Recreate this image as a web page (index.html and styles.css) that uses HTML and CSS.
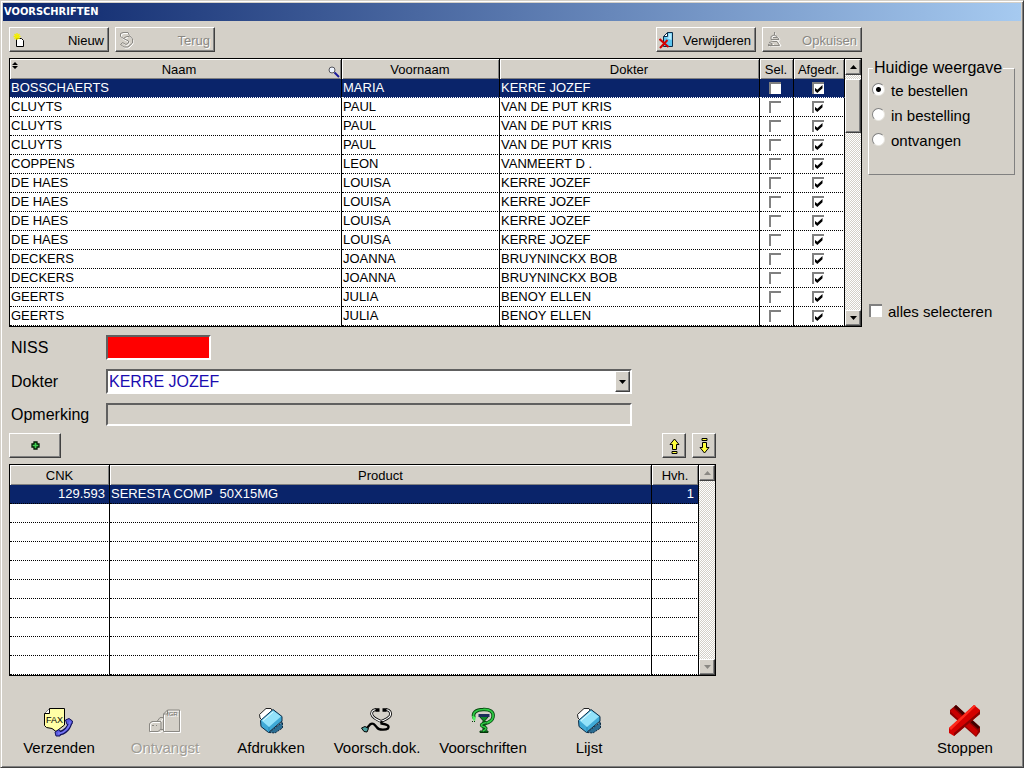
FILE: index.html
```html
<!DOCTYPE html>
<html lang="nl">
<head>
<meta charset="utf-8">
<title>Voorschriften</title>
<link rel="stylesheet" href="styles.css">
</head>
<body>
<svg class="defs" aria-hidden="true">
  <symbol id="printer" viewBox="0 0 32 32">
    <path d="M14 27.500L27.500 17V23L20 28z" fill="#2b6d92" stroke="#0c2a44" stroke-dasharray="2 1"/>
    <path d="M4.500 9.500L11 3.500 16 3.500 18 7 8 16 5 13z" fill="#fff" stroke="#222"/>
    <path d="M5.500 15.500L18 4.500 27 11.500V16L13.500 27.500 6 21.500z" fill="#3fa9d6" stroke="#0c2a44"/>
    <path d="M6.500 15.500L18 5.500 26 11.500 14 22z" fill="#93e2fa"/>
    <path d="M8 15.500L18 7" stroke="#e4fbff" fill="none"/>
    <path d="M14 22V26.500" stroke="#2585b4"/>
  </symbol>
  <symbol id="up" viewBox="0 0 7 4"><path d="M0 4L3.500 0 7 4z" fill="currentColor"/></symbol>
  <symbol id="down" viewBox="0 0 7 4"><path d="M0 0L3.500 4 7 0z" fill="currentColor"/></symbol>
</svg>
<div class="window">
  <header class="title"><h1>VOORSCHRIFTEN</h1></header>
  <main class="content">
    <div class="toolbar">
      <button class="btn tool" type="button">
        <svg width="18" height="18" viewBox="0 0 18 18"><path d="M4.500 7.500H9.500L11.500 9.500V15.500H4.500z" fill="#fff" stroke="#000"/><path d="M5 2V9M1.500 5.500H8.500M2.500 3L7.500 8M7.500 3L2.500 8" stroke="#f4ee00" stroke-width="1.300"/></svg>
        <span>Nieuw</span>
      </button>
      <button class="btn tool" type="button" disabled>
        <svg width="18" height="18" viewBox="0 0 18 18"><g fill="none" stroke="#fff"><path d="M3.500 3.500L6 2.500H11L12 5.500L15 9V13L11 17H7L3.500 14.500M3.500 3.500V6.500L6 8.500L10 6.500M6 8.500L11 11V13L9 14.500L5.500 12.500"/></g><g fill="none" stroke="#8a8883"><path d="M2.500 2.500L5 1.500H10L11.500 4.500L14.500 8V12L10 16H6L2.500 13.500L4.500 11.500L8 13.500L10.500 12V10L5.500 7.500L2.500 5.500V2.500M5.500 7.500L8.500 5.500H11.500"/></g></svg>
        <span>Terug</span>
      </button>
      <button class="btn tool push" type="button">
        <svg width="18" height="18" viewBox="0 0 18 18"><path d="M4.500 5.500L8.500 1.500H13.500V15.500H4.500z" fill="#5cc4ee" stroke="#0b2c4a"/><path d="M8.500 1.500V5.500H4.500z" fill="#fff" stroke="#0b2c4a"/><path d="M6 6.500H9.500V2.500H12.500V9z" fill="#b7ecff"/><path d="M0.500 8L9.500 16M8.500 9L1 17" stroke="#d40000" stroke-width="2"/></svg>
        <span>Verwijderen</span>
      </button>
      <button class="btn tool" type="button" disabled>
        <svg width="18" height="18" viewBox="0 0 18 18"><path d="M10 2V5M7 6L10 5 13 6 15 9H7zM4 13L9 10H13L16 15H4M6 16L9 13" fill="none" stroke="#fff"/><path d="M9.500 1V4M6 5.500L9 4 12 5.500 14 8.500H6zM8 6.500H12M4 11.500L8 10.500M3 13.500L7 12.500 6 15.500M8 10.500H12L14.500 14.500H3" fill="none" stroke="#8a8883"/></svg>
        <span>Opkuisen</span>
      </button>
    </div>

    <div class="grid people">
      <table>
        <colgroup><col><col class="c-first"><col class="c-doctor"><col class="c-sel"><col class="c-print"></colgroup>
        <thead><tr>
          <th class="sortable">Naam
            <svg class="sort" width="6" height="7" viewBox="0 0 6 7"><path d="M0 3L3 0 6 3zM0 4L3 7 6 4z"/></svg>
            <svg class="find" width="12" height="12" viewBox="0 0 12 12"><circle cx="4" cy="4" r="3" fill="#eef4ff" stroke="#55555c"/><path d="M6.500 6.500L11 11" stroke="#1b1b9c" stroke-width="2"/></svg>
          </th><th>Voornaam</th><th>Dokter</th><th>Sel.</th><th>Afgedr.</th></tr></thead>
        <tbody>
          <tr class="current"><td>BOSSCHAERTS</td><td>MARIA</td><td>KERRE JOZEF</td><td class="tick"><input type="checkbox" aria-label="Sel."></td><td class="tick"><input type="checkbox" aria-label="Afgedr." checked></td></tr>
          <tr><td>CLUYTS</td><td>PAUL</td><td>VAN DE PUT KRIS</td><td class="tick"><input type="checkbox" aria-label="Sel."></td><td class="tick"><input type="checkbox" aria-label="Afgedr." checked></td></tr>
          <tr><td>CLUYTS</td><td>PAUL</td><td>VAN DE PUT KRIS</td><td class="tick"><input type="checkbox" aria-label="Sel."></td><td class="tick"><input type="checkbox" aria-label="Afgedr." checked></td></tr>
          <tr><td>CLUYTS</td><td>PAUL</td><td>VAN DE PUT KRIS</td><td class="tick"><input type="checkbox" aria-label="Sel."></td><td class="tick"><input type="checkbox" aria-label="Afgedr." checked></td></tr>
          <tr><td>COPPENS</td><td>LEON</td><td>VANMEERT D .</td><td class="tick"><input type="checkbox" aria-label="Sel."></td><td class="tick"><input type="checkbox" aria-label="Afgedr." checked></td></tr>
          <tr><td>DE HAES</td><td>LOUISA</td><td>KERRE JOZEF</td><td class="tick"><input type="checkbox" aria-label="Sel."></td><td class="tick"><input type="checkbox" aria-label="Afgedr." checked></td></tr>
          <tr><td>DE HAES</td><td>LOUISA</td><td>KERRE JOZEF</td><td class="tick"><input type="checkbox" aria-label="Sel."></td><td class="tick"><input type="checkbox" aria-label="Afgedr." checked></td></tr>
          <tr><td>DE HAES</td><td>LOUISA</td><td>KERRE JOZEF</td><td class="tick"><input type="checkbox" aria-label="Sel."></td><td class="tick"><input type="checkbox" aria-label="Afgedr." checked></td></tr>
          <tr><td>DE HAES</td><td>LOUISA</td><td>KERRE JOZEF</td><td class="tick"><input type="checkbox" aria-label="Sel."></td><td class="tick"><input type="checkbox" aria-label="Afgedr." checked></td></tr>
          <tr><td>DECKERS</td><td>JOANNA</td><td>BRUYNINCKX BOB</td><td class="tick"><input type="checkbox" aria-label="Sel."></td><td class="tick"><input type="checkbox" aria-label="Afgedr." checked></td></tr>
          <tr><td>DECKERS</td><td>JOANNA</td><td>BRUYNINCKX BOB</td><td class="tick"><input type="checkbox" aria-label="Sel."></td><td class="tick"><input type="checkbox" aria-label="Afgedr." checked></td></tr>
          <tr><td>GEERTS</td><td>JULIA</td><td>BENOY ELLEN</td><td class="tick"><input type="checkbox" aria-label="Sel."></td><td class="tick"><input type="checkbox" aria-label="Afgedr." checked></td></tr>
          <tr><td>GEERTS</td><td>JULIA</td><td>BENOY ELLEN</td><td class="tick"><input type="checkbox" aria-label="Sel."></td><td class="tick"><input type="checkbox" aria-label="Afgedr." checked></td></tr>
        </tbody>
      </table>
      <div class="scroll">
        <button class="btn" type="button" aria-label="Omhoog"><svg width="7" height="4"><use href="#up"/></svg></button>
        <div class="track"><div class="thumb"></div></div>
        <button class="btn" type="button" aria-label="Omlaag"><svg width="7" height="4"><use href="#down"/></svg></button>
      </div>
    </div>

    <aside class="side">
      <fieldset>
        <legend>Huidige weergave</legend>
        <label><input type="radio" name="view" checked>te bestellen</label>
        <label><input type="radio" name="view">in bestelling</label>
        <label><input type="radio" name="view">ontvangen</label>
      </fieldset>
      <label class="all"><input type="checkbox">alles selecteren</label>
    </aside>
  </main>

  <section class="detail">
    <div class="column">
      <form class="form">
        <label for="niss">NISS</label>
        <input id="niss" class="field niss" type="text">
        <label for="dokter">Dokter</label>
        <div class="combo">
          <select id="dokter" class="field"><option>KERRE JOZEF</option></select>
          <span class="btn arrow"><svg width="7" height="4"><use href="#down"/></svg></span>
        </div>
        <label for="opm">Opmerking</label>
        <input id="opm" class="field remark" type="text">
      </form>
      <div class="actions">
        <button class="btn add" type="button" aria-label="Toevoegen"><svg width="9" height="9" viewBox="0 0 9 9"><path d="M3 1H6V3H8V6H6V8H3V6H1V3H3z" fill="#3fd050" stroke="#031c05" stroke-width="1.300"/></svg></button>
        <button class="btn move push" type="button" aria-label="Naar boven"><svg width="11" height="16" viewBox="0 0 11 16"><path d="M5.500 1L10 6.500H7.500V11.500H3.500V6.500H1z" fill="#ffff3c" stroke="#000"/><path d="M3 13.500H8V15.500H3z" fill="#ffff3c" stroke="#000"/></svg></button>
        <button class="btn move" type="button" aria-label="Naar beneden"><svg width="11" height="16" viewBox="0 0 11 16"><path d="M5.500 15L10 9.500H7.500V4.500H3.500V9.500H1z" fill="#ffff3c" stroke="#000"/><path d="M3 .5H8V2.500H3z" fill="#ffff3c" stroke="#000"/></svg></button>
      </div>
      <div class="grid products">
        <table>
          <colgroup><col class="c-cnk"><col><col class="c-qty"></colgroup>
          <thead><tr><th>CNK</th><th>Product</th><th>Hvh.</th></tr></thead>
          <tbody>
            <tr class="current"><td class="num">129.593</td><td class="pre">SERESTA COMP  50X15MG</td><td class="num">1</td></tr>
            <tr><td></td><td></td><td></td></tr>
            <tr><td></td><td></td><td></td></tr>
            <tr><td></td><td></td><td></td></tr>
            <tr><td></td><td></td><td></td></tr>
            <tr><td></td><td></td><td></td></tr>
            <tr><td></td><td></td><td></td></tr>
            <tr><td></td><td></td><td></td></tr>
            <tr><td></td><td></td><td></td></tr>
            <tr><td></td><td></td><td></td></tr>
          </tbody>
        </table>
        <div class="scroll">
          <button class="btn" type="button" aria-label="Omhoog" disabled><svg width="7" height="4"><use href="#up"/></svg></button>
          <div class="track"></div>
          <button class="btn" type="button" aria-label="Omlaag" disabled><svg width="7" height="4"><use href="#down"/></svg></button>
        </div>
      </div>
    </div>
  </section>

  <footer class="bottom">
    <button type="button">
      <svg width="32" height="32" viewBox="0 0 32 32"><path d="M6.500 3.500H21.500V20L13 26.500 9 23.500 3.500 22.500 1.500 20.500V8.500z" fill="#ffffa6" stroke="#000"/><path d="M1.500 8.500H6.500V3.500" fill="#fff" stroke="#000"/><text class="fax" x="3" y="18">FAX</text><path d="M27 16.500C27 22 22 28 15 28.500" fill="none" stroke="#101058" stroke-width="4.500"/><path d="M22.500 15L26 13.500 29.500 16 29 19 24 19.500zM12 27L16 24.500 18 27.500 17 31 13 31z" fill="#5a5ae0" stroke="#101058"/><path d="M27 16.500C27 22 22 28 15 28.500" fill="none" stroke="#7474f4" stroke-width="2"/></svg>
      <span>Verzenden</span>
    </button>
    <button type="button" disabled>
      <svg width="32" height="32" viewBox="0 0 32 32"><g fill="none" stroke="#fff"><path d="M19.500 6H31.500V27.500H15.500V10zM1.500 19.500L4 17.500H11L15 13M15 25.500L11 27.500H1.500V19.500"/></g><g fill="none" stroke="#8a8883"><path d="M18.500 5H30.500V26.500H14.500V9zM14.500 9H18.500V5M.5 18.500L3 16.500H8L11 12.500H14M12 17V24L9 26.500H.5V18.500M8 16.500H12M12 24.500H14M3 20.500H5M7 20.500H8"/></g><text class="card" x="18" y="11">IGR</text></svg>
      <span>Ontvangst</span>
    </button>
    <button type="button"><svg width="32" height="32"><use href="#printer"/></svg><span>Afdrukken</span></button>
    <button type="button">
      <svg width="32" height="32" viewBox="0 0 32 32"><g fill="none"><path d="M15 4.500C11 5 9.500 8 11.500 11C13.500 14 17 15 20 16.500C23 15 27 14 29 11C30.500 8 29 5 25 4.500" stroke="#000" stroke-width="2.800"/><path d="M15 4.500C11 5 9.500 8 11.500 11C13.500 14 17 15 20 16.500C23 15 27 14 29 11C30.500 8 29 5 25 4.500" stroke="#fff" stroke-width="1.200"/><path d="M6 23L9 19.500C12 17 14 20 16 22.500C18 25.500 25 25 27 23.500C28.500 21 27 19.500 20.500 18.500V16" stroke="#000" stroke-width="2.300"/><path d="M14.500 5H18.500M21.500 5H25.500" stroke="#000" stroke-width="3.500"/></g><path d="M.5 23L4 21.500 7.500 23.500 6 27 3 26.500z" fill="#4ca0a0" stroke="#000"/></svg>
      <span>Voorsch.dok.</span>
    </button>
    <button type="button">
      <svg width="32" height="32" viewBox="0 0 32 32"><g fill="none"><path d="M7 13C5 8 9 4.500 16 4.500C23 4 27 7 26 12C25.500 15 22 17.500 18 18.500" stroke="#064a10" stroke-width="3.500"/><path d="M7 13C5 8 9 4.500 16 4.500C23 4 27 7 26 12C25.500 15 22 17.500 18 18.500" stroke="#2fc945" stroke-width="1.700"/></g><path d="M5 11L9 12 8 16 6 15z" fill="#4cf060"/><path d="M12 11H22L18 15.500V26H21V27.500H13V26H16V15.500z" fill="#0e8a28" stroke="#043608"/><path d="M11.500 9H22.500V12H11.500z" fill="#1c2c5c"/><path d="M19.500 17.500C14 18.500 13 20.500 16 21.500C20 22.500 20 24.500 16 26" fill="none" stroke="#064a10" stroke-width="3"/><path d="M19.500 17.500C14 18.500 13 20.500 16 21.500C20 22.500 20 24.500 16 26" fill="none" stroke="#2fc945" stroke-width="1.500"/><path d="M5 17L6 16M8 17L7 16" stroke="#043608"/></svg>
      <span>Voorschriften</span>
    </button>
    <button type="button"><svg width="32" height="32"><use href="#printer"/></svg><span>Lijst</span></button>
    <button class="push" type="button">
      <svg width="32" height="32" viewBox="0 0 32 32"><path d="M1 5L7 0 31 22V27L27 32 1 9z" fill="#8e0000"/><path d="M7 0L31 22 29 24 5 2z" fill="#400000"/><path d="M1 6L4 3 29 26 27 31z" fill="#c80000"/><path d="M25 0L31 5V9L5 31 0 28V23z" fill="#d40000"/><path d="M25 0L27 1 2 25 0 23z" fill="#ff2a1c"/><path d="M31 6V9L5 31V28z" fill="#8a0000"/></svg>
      <span>Stoppen</span>
    </button>
  </footer>
</div>
</body>
</html>
```
FILE: styles.css
```css
* { box-sizing: border-box; }

body {
  margin: 0;
  background: #d4d0c8;
  color: #000;
  font-family: "Liberation Sans", Arial, sans-serif;
  font-size: 13px;
}

button, input, select { font: inherit; color: inherit; margin: 0; }

svg { display: block; flex: none; }

.defs { position: absolute; width: 0; height: 0; }

.window {
  min-height: 100vh;
  display: flex;
  flex-direction: column;
  padding: 2px;
  border: 1px solid;
  border-color: #d4d0c8 #404040 #404040 #d4d0c8;
  box-shadow: inset 1px 1px #fff, inset -1px -1px #808080;
}

.title {
  height: 18px;
  padding-left: 1px;
  background: linear-gradient(90deg, #0a246a, #a6caf0);
}

.title h1 {
  margin: 0;
  color: #fff;
  font: bold 11px/18px "DejaVu Sans Condensed", "DejaVu Sans", sans-serif;
}

.content {
  display: grid;
  grid-template-columns: minmax(0, 1fr) 147px;
  gap: 6px;
  padding: 6px 6px 0 6px;
}

.push { margin-left: auto; }

/* raised controls */
.btn {
  display: flex;
  align-items: center;
  justify-content: center;
  padding: 0;
  background: #d4d0c8;
  border: 1px solid;
  border-color: #fff #404040 #404040 #fff;
  box-shadow: inset -1px -1px #808080;
}

.btn:disabled { color: #8a8883; text-shadow: 1px 1px #fff; }

.toolbar { grid-column: 1; display: flex; gap: 6px; }

.tool {
  width: 100px;
  height: 25px;
  padding: 0 4px 0 2px;
  justify-content: space-between;
}

.tool.push { margin-left: auto; }

.tool span { padding-top: 1px; }

/* record grids */
.grid {
  display: flex;
  border: 1px solid #000;
  background: #fff;
}

.people { grid-column: 1; }

.grid table {
  flex: 1;
  width: 100%;
  min-width: 0;
  table-layout: fixed;
  border-spacing: 0;
}

.c-first { width: 158px; }
.c-doctor { width: 260px; }
.c-sel { width: 34px; }
.c-print { width: 51px; }
.c-cnk { width: 100px; }
.c-qty { width: 47px; }

th {
  height: 20px;
  padding: 1px 0 0;
  font-weight: normal;
  line-height: 18px;
  background: #d4d0c8;
  border-right: 1px solid #000;
  box-shadow: inset 1px 1px #fff, inset -1px -1px #808080;
}

.people th { padding-right: 1px; }

.sortable { position: relative; }
.people .sortable { padding-left: 8px; }
.sort { position: absolute; left: 2px; top: 3px; }
.find { position: absolute; right: 1px; bottom: 1px; }

td {
  height: 19px;
  padding: 0 1px;
  line-height: 18px;
  white-space: nowrap;
  overflow: hidden;
  border-right: 1px solid #000;
  border-bottom: 1px dotted #000;
}

.current td { background: #0a246a; color: #fff; }
.people .current td { border-bottom-color: #fff; }
.num { text-align: right; padding-right: 4px; }
.pre { white-space: pre; }
.tick { text-align: center; line-height: 0; padding: 0 4px 0 1px; }

input[type="checkbox"] {
  appearance: none;
  width: 13px;
  height: 13px;
  background: #fff;
  border: solid #808080;
  border-width: 2px 0 0 2px;
  vertical-align: middle;
}

.tick input { width: 12px; height: 12px; }

input[type="checkbox"]:checked::before {
  content: "";
  display: block;
  width: 8px;
  height: 8px;
  margin: 1px;
  background: #000;
  clip-path: polygon(0 30%, 35% 60%, 100% 0, 100% 40%, 35% 100%, 0 70%);
}

.scroll {
  width: 16px;
  display: flex;
  flex-direction: column;
}

.scroll .btn { height: 16px; }

.track {
  flex: 1;
  padding-top: 4px;
  background: repeating-conic-gradient(#d4d0c8 0 25%, #fff 0 50%) 0 0 / 2px 2px;
}

.thumb {
  height: 54px;
  background: #d4d0c8;
  border: 1px solid;
  border-color: #fff #404040 #404040 #fff;
  box-shadow: inset -1px -1px #808080;
}

/* view filter */
.side {
  display: flex;
  flex-direction: column;
  justify-content: space-between;
  padding-bottom: 3px;
  font-size: 15px;
}

.side label { display: flex; align-items: center; height: 25px; }

.side input { margin-bottom: 3px; }

fieldset {
  min-width: 0;
  margin: 0;
  padding: 0 0 21px 3px;
  border: 1px solid;
  border-color: #fff #808080 #808080 #fff;
}

legend {
  padding: 0 1px;
  margin-left: 1px;
  font-size: 16px;
  line-height: 20px;
}

input[type="radio"] {
  appearance: none;
  width: 13px;
  height: 13px;
  margin-right: 6px;
  border: 1px solid;
  border-color: #808080 #e8e6e0 #e8e6e0 #808080;
  border-radius: 50%;
  background: #fff;
}

input[type="radio"]:checked {
  background: radial-gradient(circle, #000 0 2px, #fff 3px);
}

.all { padding-left: 1px; }
.all input { margin-right: 6px; }

/* detail form */
.detail {
  display: grid;
  grid-template-columns: 707fr 300fr;
  padding: 8px 5px 0 6px;
}

.column { display: flex; flex-direction: column; }

.form {
  display: grid;
  grid-template-columns: 97px 1fr;
  grid-template-rows: 25px 25px 23px;
  row-gap: 9px;
  align-items: center;
  padding-right: 84px;
  font-size: 16px;
}

.form label { padding-left: 2px; }

.field {
  width: 100%;
  height: 25px;
  padding: 0 1px;
  border: 2px solid;
  border-color: #606060 #fff #fff #606060;
  border-radius: 0;
  background: #fff;
  color: #1a0cb0;
}

.niss { width: 105px; background: #f00; }
.remark { height: 23px; background: #d4d0c8; }
.combo { position: relative; }
.combo .field { display: block; appearance: none; }
.arrow { position: absolute; top: 2px; right: 2px; bottom: 2px; width: 15px; pointer-events: none; }

.actions { display: flex; gap: 6px; padding: 7px 0 6px; }
.add { width: 52px; height: 25px; }
.move { width: 24px; height: 25px; }

/* bottom commands */
.bottom { display: flex; margin-top: auto; padding: 28px 3px 8px; }

.bottom button {
  width: 106px;
  display: flex;
  flex-direction: column;
  align-items: center;
  gap: 2px;
  padding: 0;
  border: 0;
  background: none;
  font-size: 15px;
  line-height: 18px;
}

.bottom button:disabled { color: #a09d96; text-shadow: 1px 1px #fff; }

.fax { font: 9px "Liberation Sans", sans-serif; }
.card { font: 6px "Liberation Sans", sans-serif; fill: #6c6a66; }
```
